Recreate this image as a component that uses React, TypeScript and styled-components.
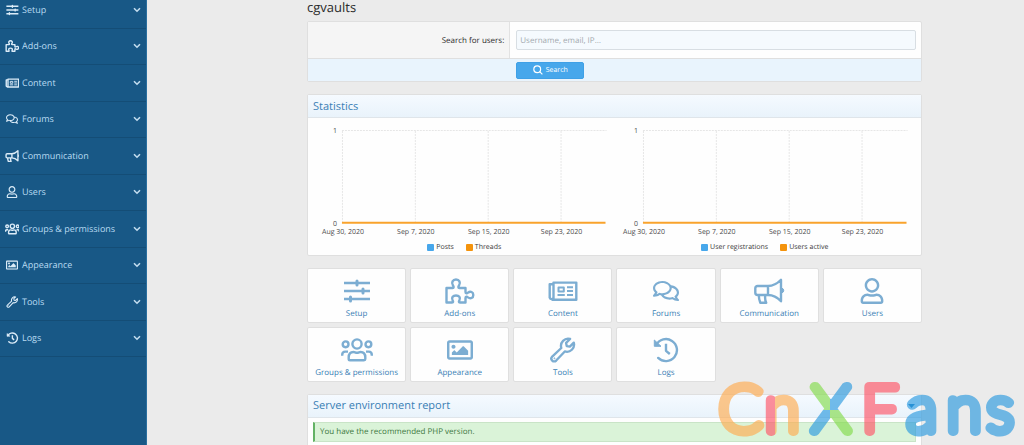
import React from "react";
import styled, { createGlobalStyle } from "styled-components";
import { FaRegComments, FaRegImage, FaRegUser } from "react-icons/fa";

const font = '"Open Sans", "Noto Sans", sans-serif';

const GlobalStyle = createGlobalStyle`
  *, *::before, *::after { box-sizing: border-box; }
  body { margin: 0; background: #ebebeb; font-family: ${font}; color: #2c2c2c; text-rendering: geometricPrecision; }
  button, input { font-family: inherit; text-rendering: inherit; }
`;

const Page = styled.div`
  position: relative;
  display: flex;
  height: 100vh;
  overflow: hidden;
`;

const Sidebar = styled.nav`
  flex: 0 0 147px;
  background: #185886;
  border-right: 1px solid #2a6f9f;
`;

const NavList = styled.ul`
  display: grid;
  grid-template-rows: repeat(10, 1fr);
  height: 365px;
  margin: -8px 0 0;
  padding: 0;
  list-style: none;
`;

const NavItem = styled.li`
  display: flex;
  border-bottom: 1px solid #144d76;
`;

const NavButton = styled.button`
  flex: 1;
  display: flex;
  align-items: center;
  gap: 3px;
  padding: 0 5px;
  border: 0;
  background: none;
  color: #b9dbf2;
  font-size: 9px;
  line-height: 14px;
  text-align: left;
`;

const NavLabel = styled.span`
  flex: 1;
  white-space: nowrap;
`;

const IconBox = styled.span<{ $size: number }>`
  display: flex;
  justify-content: center;
  align-items: center;
  width: ${(p) => Math.round((p.$size * 16) / 13)}px;
  height: ${(p) => p.$size}px;
  svg { flex: none; display: block; height: ${(p) => p.$size}px; width: auto; }
`;

const NavIcon = styled(IconBox)`
  width: 14px;
  color: #dcecf8;
  svg { stroke-width: 3; }
`;

const Main = styled.main`
  flex: 1;
  min-width: 0;
  padding: 0 102px 0 160px;
`;

const Title = styled.h1`
  margin: 0 0 7px;
  font-size: 13px;
  line-height: 14px;
  font-weight: 400;
`;

const Block = styled.section`
  margin-bottom: 12px;
  background: #fefefe;
  border: 1px solid #dfdfdf;
  border-radius: 2px;
`;

const SearchForm = styled.form`
  display: block;
`;

const FormRow = styled.div`
  display: grid;
  grid-template-columns: 33% 1fr;
  height: 37px;
  border-bottom: 1px solid #dfdfdf;
`;

const FormLabel = styled.label`
  display: flex;
  align-items: center;
  justify-content: flex-end;
  padding-right: 5px;
  background: #f5f5f5;
  border-right: 1px solid #e2e2e2;
  font-size: 8px;
`;

const FormField = styled.div`
  display: flex;
  align-items: center;
  padding: 0 5px 0 6px;
`;

const TextInput = styled.input`
  width: 100%;
  height: 20px;
  padding: 0 3px;
  border: 1px solid #d8dee3;
  border-radius: 2px;
  background: #f5fafe;
  font-size: 8px;
  color: #2c2c2c;
  &::placeholder { color: #a3a9ae; opacity: 1; }
`;

const SubmitRow = styled.div`
  display: grid;
  grid-template-columns: 33% 1fr;
  align-items: center;
  height: 22px;
  background: #e9f4fd;
`;

const SubmitButton = styled.button`
  grid-column: 2;
  display: flex;
  align-items: center;
  justify-content: center;
  gap: 3px;
  width: 68px;
  height: 17px;
  margin-left: 6px;
  padding: 0;
  border: 1px solid #3fa0e6;
  border-radius: 2px;
  background: #47a7eb;
  color: #fff;
  font-size: 7px;
`;

const BlockHeader = styled.h2`
  display: flex;
  align-items: center;
  justify-content: space-between;
  height: 23px;
  margin: 0;
  padding: 0 6px 0 5px;
  background: linear-gradient(#f5faff, #e9f3fb);
  border-bottom: 1px solid #dfe5ea;
  color: #3a7fb5;
  font-size: 11px;
  font-weight: 400;
`;

const Charts = styled.div`
  display: grid;
  grid-template-columns: 1fr 1fr;
  padding: 0 6px;
`;

const Chart = styled.figure`
  margin: 0;
`;

const Plot = styled.svg`
  display: block;
  width: 100%;
  height: auto;
  font-size: 7px;
  fill: #4a4a4a;
`;

const Legend = styled.figcaption`
  display: flex;
  justify-content: center;
  gap: 12px;
  height: 16px;
  padding-top: 4px;
  font-size: 7px;
  line-height: 10px;
  color: #3a3a3a;
`;

const LegendEntry = styled.span<{ $color: string }>`
  display: flex;
  align-items: center;
  height: 10px;
  gap: 2px;
  &::before {
    content: "";
    width: 7px;
    height: 7px;
    border-radius: 1px;
    background: ${(p) => p.$color};
  }
`;

const Tiles = styled.div`
  display: grid;
  grid-template-columns: repeat(6, 1fr);
  gap: 4px;
  margin-bottom: 12px;
`;

const Tile = styled.a`
  display: flex;
  flex-direction: column;
  align-items: center;
  gap: 4px;
  height: 55px;
  padding-top: 9px;
  border: 1px solid #dfdfdf;
  border-radius: 2px;
  background: #fefefe;
  color: #3a7fb5;
  font-size: 8px;
  line-height: 12px;
  text-decoration: none;
  white-space: nowrap;
`;

const TileIcon = styled(IconBox)`
  color: #7cadd2;
`;

const Report = styled.div`
  padding: 4px 5px;
`;

const Message = styled.p`
  margin: 0;
  padding: 0 5px;
  border: 1px solid #c9e4c7;
  border-left: 2px solid #63b265;
  background: #daf3d8;
  color: #3d793f;
  font-size: 8px;
  line-height: 18px;
`;

const Watermark = styled.svg`
  position: absolute;
  right: 0;
  bottom: 0;
  width: 310px;
  height: 85px;
  pointer-events: none;
  font-family: Lato, sans-serif;
  font-weight: 100;
  font-size: 63px;
  stroke-linejoin: round;
  stroke-linecap: round;
  stroke-width: 10px;
`;

const Letter = styled.text<{ $color: string }>`
  fill: ${(p) => p.$color};
  stroke: ${(p) => p.$color};
  opacity: 0.65;
`;

function Line({ children }: { children: React.ReactNode }) {
  return (
    <svg viewBox="0 0 32 26" fill="none" stroke="currentColor" strokeWidth="2.4" strokeLinejoin="round" aria-hidden="true">
      {children}
    </svg>
  );
}

const Sliders = () => (
  <Line>
    <path d="M3 5H29M3 13H29M3 21H29" />
    <path d="M16 3V7M22 11V15M9.5 19V23" strokeWidth="3" strokeLinecap="round" />
  </Line>
);

const Puzzle = () => (
  <Line>
    <path d="M2.5 10H8.6C10 10 9.8 8.6 9 7.6C7 4.5 8.8 1.5 12 1.5C15.2 1.5 17 4.5 15 7.6C14.2 8.6 14 10 15.4 10H21.5V14C21.5 15.6 23 15.4 24 14.6C26.5 12.8 29.3 14 29.3 17C29.3 20 26.5 21.2 24 19.4C23 18.6 21.5 18.4 21.5 20V24.5H16C14.5 24.5 14.8 23.3 15.4 22.3C16.8 19.5 15 17.5 12 17.5C9 17.5 7.2 19.5 8.6 22.3C9.2 23.3 9.5 24.5 8 24.5H2.5Z" />
  </Line>
);

const Newspaper = () => (
  <Line>
    <path d="M6.5 5V19.7A2 2 0 0 1 2.7 19.7V6.3H6.5M6.5 21V4.6H29.3V21.7H4.6" />
    <path d="M11.5 9.5H16.8V13.5H11.5ZM20 9.3H26M20 13H26M10.5 17H17.8M20 17H26" strokeWidth="2" />
  </Line>
);

const Bullhorn = () => (
  <Line>
    <path d="M15 8H4.5a2.2 2.2 0 0 0-2.2 2.2v4.6a2.2 2.2 0 0 0 2.2 2.2H15ZM15 8C20 8 25 5 28 1.8V23.2C25 20 20 17 15 17M5.8 17C5.8 20 6.4 22.5 7.3 24.8H13.2C12.2 22.5 11.6 20.5 12.4 17" />
    <path d="M29 10.2a2.4 2.4 0 0 1 0 4.6Z" fill="currentColor" strokeWidth="1" />
  </Line>
);

const Users = () => (
  <Line>
    <circle cx="16" cy="7" r="4.6" />
    <circle cx="4.6" cy="7.3" r="2.9" />
    <circle cx="27.4" cy="7.3" r="2.9" />
    <path d="M9 23.3H23A1.3 1.3 0 0 0 24.3 22V20.5C24.3 17 22.3 15 19.5 15C18.3 15 17.5 15.8 16 15.8C14.5 15.8 13.7 15 12.5 15C9.7 15 7.7 17 7.7 20.5V22A1.3 1.3 0 0 0 9 23.3Z" />
    <path d="M1.2 18.8V18C1.2 16 2.4 14.6 4.2 14.6H7M30.8 18.8V18C30.8 16 29.6 14.6 27.8 14.6H25" />
  </Line>
);

const Wrench = () => (
  <Line>
    <g transform="translate(1 -2) scale(1.24)" strokeWidth="1.9">
      <path d="M17.8 3.2 14.6 6.4 15.1 8.9 17.6 9.4 20.8 6.2A5.8 5.8 0 0 1 13.53 13.27L6.6 20.6A2.2 2.2 0 0 1 3.4 17.4L10.73 10.47A5.8 5.8 0 0 1 17.8 3.2Z" />
      <circle cx="5.2" cy="18.8" r=".4" strokeWidth=".8" />
    </g>
  </Line>
);

const History = () => (
  <Line>
    <path d="M6.2 8A11 11 0 1 1 8.2 20.9" strokeLinecap="round" />
    <path d="M4.3 3V9.3H11Z" fill="currentColor" strokeWidth="1" />
    <path d="M16 6.8V13.8L19.8 17" />
  </Line>
);

const Chevron = () => (
  <svg width="8" height="6" viewBox="0 0 8 6" fill="none" stroke="#c3ddef" strokeWidth="1.6" aria-hidden="true">
    <path d="M1 1.2 4 4.2 7 1.2" />
  </svg>
);

const sections = [
  { name: "Setup", Icon: Sliders },
  { name: "Add-ons", Icon: Puzzle },
  { name: "Content", Icon: Newspaper },
  { name: "Forums", Icon: FaRegComments },
  { name: "Communication", Icon: Bullhorn },
  { name: "Users", Icon: FaRegUser },
  { name: "Groups & permissions", Icon: Users },
  { name: "Appearance", Icon: FaRegImage },
  { name: "Tools", Icon: Wrench },
  { name: "Logs", Icon: History },
];

const dates = ["Aug 30, 2020", "Sep 7, 2020", "Sep 15, 2020", "Sep 23, 2020"];

function StatChart({ first, second }: { first: string; second: string }) {
  return (
    <Chart>
      <Plot viewBox="0 0 301 121" role="img" aria-label={`${first} and ${second}`}>
        <g stroke="#e6e6e6" strokeDasharray="2 1">
          <path d="M28 12.5H293" />
          {dates.map((d, i) => (
            <path key={d} d={`M${28.5 + i * 73} 13V104`} />
          ))}
        </g>
        <path d="M28 105H292" stroke="#f9a32c" strokeWidth="2" />
        <text x="23" y="15" textAnchor="end">1</text>
        <text x="23" y="108" textAnchor="end">0</text>
        {dates.map((d, i) => (
          <text key={d} x={29 + i * 73} y="116" textAnchor="middle">{d}</text>
        ))}
      </Plot>
      <Legend>
        <LegendEntry $color="#47a7eb">{first}</LegendEntry>
        <LegendEntry $color="#f4930c">{second}</LegendEntry>
      </Legend>
    </Chart>
  );
}

export default function App() {
  return (
    <Page>
      <GlobalStyle />
      <Sidebar>
        <NavList>
          {sections.map(({ name, Icon }) => (
            <NavItem key={name}>
              <NavButton type="button">
                <NavIcon $size={12}><Icon /></NavIcon>
                <NavLabel>{name}</NavLabel>
                <Chevron />
              </NavButton>
            </NavItem>
          ))}
        </NavList>
      </Sidebar>
      <Main>
        <Title>cgvaults</Title>
        <Block>
          <SearchForm onSubmit={(e) => e.preventDefault()}>
            <FormRow>
              <FormLabel htmlFor="user-query">Search for users:</FormLabel>
              <FormField>
                <TextInput id="user-query" type="text" placeholder="Username, email, IP…" />
              </FormField>
            </FormRow>
            <SubmitRow>
              <SubmitButton type="submit">
                <svg width="10" height="10" viewBox="0 0 10 10" fill="none" stroke="currentColor" strokeWidth="1.2" aria-hidden="true">
                  <circle cx="4.2" cy="4.2" r="3.4" />
                  <path d="M6.7 6.7 9.4 9.4" />
                </svg>
                Search
              </SubmitButton>
            </SubmitRow>
          </SearchForm>
        </Block>
        <Block>
          <BlockHeader>Statistics</BlockHeader>
          <Charts>
            <StatChart first="Posts" second="Threads" />
            <StatChart first="User registrations" second="Users active" />
          </Charts>
        </Block>
        <Tiles>
          {sections.map(({ name, Icon }) => (
            <Tile key={name} href="#">
              <TileIcon $size={26}><Icon /></TileIcon>
              {name}
            </Tile>
          ))}
        </Tiles>
        <Block>
          <BlockHeader>
            Server environment report
            <svg width="7" height="4" viewBox="0 0 7 4" fill="#1f7fc4" aria-hidden="true">
              <path d="M0 0H7L3.5 4Z" />
            </svg>
          </BlockHeader>
          <Report>
            <Message>You have the recommended PHP version.</Message>
          </Report>
        </Block>
      </Main>
      <Watermark viewBox="714 360 310 85" aria-label="CnXFans">
        <defs>
          <linearGradient id="two-tone" gradientUnits="userSpaceOnUse" x1="760" x2="800" y1="0" y2="0">
            <stop offset="0.38" stopColor="#ff5568" />
            <stop offset="0.38" stopColor="#ffac50" />
          </linearGradient>
          <pattern id="crossing" patternUnits="userSpaceOnUse" x="800" y="360" width="60" height="100">
            <rect width="60" height="100" fill="#2c9be0" />
            <path d="M0 0H30V50H60V100H30V50H0Z" fill="#84dc4c" />
          </pattern>
        </defs>
        <Letter $color="#ffac50" x="719" y="431">C</Letter>
        <Letter $color="url(#two-tone)" x="765" y="431">n</Letter>
        <Letter $color="url(#crossing)" x="812" y="431">X</Letter>
        <Letter $color="#ff5568" x="862" y="431">F</Letter>
        <Letter $color="#2c9be0" x="907" y="431">a</Letter>
        <Letter $color="#2c9be0" x="947" y="431">n</Letter>
        <Letter $color="#2c9be0" x="987" y="431">s</Letter>
      </Watermark>
    </Page>
  );
}
